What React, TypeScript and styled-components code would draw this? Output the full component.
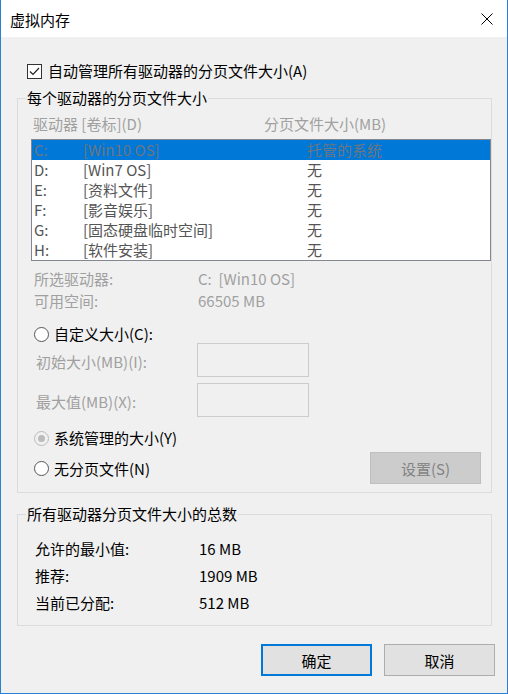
import React from "react";
import styled, { createGlobalStyle } from "styled-components";

type Drive = {
  letter: string;
  label: string;
  size: string;
};

const drives: Drive[] = [
  { letter: "C:", label: "[Win10 OS]", size: "托管的系统" },
  { letter: "D:", label: "[Win7 OS]", size: "无" },
  { letter: "E:", label: "[资料文件]", size: "无" },
  { letter: "F:", label: "[影音娱乐]", size: "无" },
  { letter: "G:", label: "[固态硬盘临时空间]", size: "无" },
  { letter: "H:", label: "[软件安装]", size: "无" },
];

const totals = [
  { label: "允许的最小值:", value: "16 MB" },
  { label: "推荐:", value: "1909 MB" },
  { label: "当前已分配:", value: "512 MB" },
];

const GlobalStyle = createGlobalStyle`
  html, body {
    margin: 0;
    padding: 0;
    background: #ffffff;
  }

  body {
    font-family: "Noto Sans CJK SC", "Noto Sans", sans-serif;
    font-size: 15px;
    color: #000000;
  }
`;

const App = () => {
  return (
    <>
      <GlobalStyle />
      <Window>
        <TitleBar>
          <Title>虚拟内存</Title>
          <CloseButton aria-label="关闭">
            <svg width="12" height="12" viewBox="0 0 12 12">
              <path d="M0.5 0.5 L11.5 11.5 M11.5 0.5 L0.5 11.5" stroke="#000" strokeWidth="1" />
            </svg>
          </CloseButton>
        </TitleBar>

        <Body>
          <CheckRow>
            <CheckBox>
              <svg width="13" height="13" viewBox="0 0 13 13">
                <path d="M2 6.5 L5 9.5 L11 3" fill="none" stroke="#222" strokeWidth="1.2" />
              </svg>
            </CheckBox>
            <span>自动管理所有驱动器的分页文件大小(A)</span>
          </CheckRow>

          <Group>
            <Legend>每个驱动器的分页文件大小</Legend>
            <GroupContent>
              <HeaderRow>
                <HeaderCell>驱动器 [卷标](D)</HeaderCell>
                <HeaderCell>分页文件大小(MB)</HeaderCell>
              </HeaderRow>

              <ListBox>
                {drives.map((drive, idx) => (
                  <ListRow key={drive.letter} selected={idx === 0}>
                    <LetterCell>{drive.letter}</LetterCell>
                    <LabelCell>{drive.label}</LabelCell>
                    <SizeCell>{drive.size}</SizeCell>
                  </ListRow>
                ))}
              </ListBox>

              <InfoBlock>
                <InfoRow>
                  <InfoLabel>所选驱动器:</InfoLabel>
                  <span>C:&nbsp;&nbsp;[Win10 OS]</span>
                </InfoRow>
                <InfoRow>
                  <InfoLabel>可用空间:</InfoLabel>
                  <span>66505 MB</span>
                </InfoRow>
              </InfoBlock>

              <RadioRow top={13}>
                <Radio />
                <span>自定义大小(C):</span>
              </RadioRow>

              <FieldRow top={0}>
                <FieldLabel>初始大小(MB)(I):</FieldLabel>
                <TextBox />
              </FieldRow>
              <FieldRow top={6}>
                <FieldLabel>最大值(MB)(X):</FieldLabel>
                <TextBox />
              </FieldRow>

              <RadioRow top={12}>
                <Radio checked disabled />
                <span>系统管理的大小(Y)</span>
              </RadioRow>

              <LastRow>
                <RadioLabel>
                  <Radio />
                  <span>无分页文件(N)</span>
                </RadioLabel>
                <SetButton disabled>设置(S)</SetButton>
              </LastRow>
            </GroupContent>
          </Group>

          <Group top={11}>
            <Legend>所有驱动器分页文件大小的总数</Legend>
            <TotalsContent>
              {totals.map((row) => (
                <TotalRow key={row.label}>
                  <TotalLabel>{row.label}</TotalLabel>
                  <span>{row.value}</span>
                </TotalRow>
              ))}
            </TotalsContent>
          </Group>

          <Footer>
            <DialogButton primary>确定</DialogButton>
            <DialogButton>取消</DialogButton>
          </Footer>
        </Body>
      </Window>
    </>
  );
};

const Window = styled.div`
  width: 508px;
  height: 694px;
  box-sizing: border-box;
  border: 1px solid #2b80d2;
  border-top: none;
  display: flex;
  flex-direction: column;
  background: #f0f0f0;
  overflow: hidden;
`;

const TitleBar = styled.div`
  height: 37px;
  flex-shrink: 0;
  background: #ffffff;
  display: flex;
  align-items: center;
  justify-content: space-between;
  padding: 0 14px 0 9px;
`;

const Title = styled.div`
  font-size: 15px;
  line-height: 20px;
  margin-top: 2px;
`;

const CloseButton = styled.div`
  width: 12px;
  height: 12px;
  margin-top: 1px;
  display: flex;

  svg {
    display: block;
  }
`;

const Body = styled.div`
  flex: 1;
  display: flex;
  flex-direction: column;
  padding: 24px 15px 0 16px;
`;

const CheckRow = styled.div`
  display: flex;
  align-items: center;
  gap: 6px;
  height: 20px;
  padding-left: 10px;
  line-height: 20px;
`;

const CheckBox = styled.div`
  width: 13px;
  height: 13px;
  border: 1px solid #333333;
  background: #ffffff;
  display: flex;

  svg {
    display: block;
  }
`;

const Group = styled.fieldset<{ top?: number }>`
  margin: ${({ top }) => top ?? 7}px 0 0 0;
  padding: 0;
  border: 1px solid #dcdcdc;
  min-width: 0;
`;

const Legend = styled.legend`
  margin-left: 8px;
  padding: 0 1px;
  line-height: 20px;
  font-size: 15px;
`;

const GroupContent = styled.div`
  display: flex;
  flex-direction: column;
  padding: 6px 0 8px 13px;
`;

const HeaderRow = styled.div`
  display: grid;
  grid-template-columns: 231px 1fr;
  height: 20px;
  line-height: 20px;
  padding-left: 2px;
  color: #a0a0a0;
`;

const HeaderCell = styled.div`
  white-space: nowrap;
`;

const ListBox = styled.div`
  margin-top: 5px;
  border: 1px solid #828790;
  background: #ffffff;
  display: flex;
  flex-direction: column;
`;

const ListRow = styled.div<{ selected?: boolean }>`
  display: grid;
  grid-template-columns: 49px 224px 1fr;
  height: 20px;
  line-height: 20px;
  padding-left: 2px;
  background: ${({ selected }) => (selected ? "#0078d7" : "transparent")};
  color: ${({ selected }) => (selected ? "#6d7580" : "#555555")};
  white-space: nowrap;
`;

const LetterCell = styled.div``;

const LabelCell = styled.div``;

const SizeCell = styled.div``;

const InfoBlock = styled.div`
  margin-top: 7px;
  display: flex;
  flex-direction: column;
  color: #a0a0a0;
`;

const InfoRow = styled.div`
  display: grid;
  grid-template-columns: 164px 1fr;
  height: 22px;
  line-height: 22px;
  padding-left: 3px;
`;

const InfoLabel = styled.span``;

const RadioRow = styled.div<{ top: number }>`
  display: flex;
  align-items: center;
  gap: 5px;
  height: 18px;
  margin-top: ${({ top }) => top}px;
  padding-left: 3px;
  line-height: 18px;
`;

const RadioLabel = styled.div`
  display: flex;
  align-items: center;
  gap: 5px;
  padding-left: 3px;
`;

const Radio = styled.span<{ checked?: boolean; disabled?: boolean }>`
  width: 13px;
  height: 13px;
  border-radius: 50%;
  border: 1px solid ${({ disabled }) => (disabled ? "#bcbcbc" : "#555555")};
  background: ${({ disabled }) => (disabled ? "#f0f0f0" : "#ffffff")};
  display: flex;
  align-items: center;
  justify-content: center;
  flex-shrink: 0;

  &::after {
    content: "";
    width: 7px;
    height: 7px;
    border-radius: 50%;
    background: #bcbcbc;
    display: ${({ checked }) => (checked ? "block" : "none")};
  }
`;

const FieldRow = styled.div<{ top: number }>`
  display: grid;
  grid-template-columns: 166px 112px;
  align-items: center;
  margin-top: ${({ top }) => top}px;
`;

const FieldLabel = styled.span`
  padding-left: 5px;
  padding-top: 2px;
  color: #a0a0a0;
  white-space: nowrap;
`;

const TextBox = styled.div`
  height: 34px;
  box-sizing: border-box;
  border: 1px solid #cccccc;
  background: #f0f0f0;
`;

const LastRow = styled.div`
  display: flex;
  align-items: center;
  justify-content: space-between;
  margin-top: 5px;
  padding-right: 10px;
`;

const SetButton = styled.button`
  width: 111px;
  height: 32px;
  box-sizing: border-box;
  border: 1px solid #bfbfbf;
  background: #cccccc;
  color: #838383;
  font-family: inherit;
  font-size: 15px;
  padding: 0;
`;

const TotalsContent = styled.div`
  display: flex;
  flex-direction: column;
  padding: 11px 0 9px 17px;
`;

const TotalRow = styled.div`
  display: grid;
  grid-template-columns: 164px 1fr;
  height: 27px;
  line-height: 27px;
`;

const TotalLabel = styled.span``;

const Footer = styled.div`
  display: flex;
  justify-content: flex-end;
  gap: 12px;
  margin: 18px -3px 0 0;
`;

const DialogButton = styled.button<{ primary?: boolean }>`
  width: 111px;
  height: 32px;
  box-sizing: border-box;
  border: ${({ primary }) => (primary ? "2px solid #0078d7" : "1px solid #adadad")};
  background: #e1e1e1;
  color: #000000;
  font-family: inherit;
  font-size: 15px;
  padding: 0;
`;

export default App;
